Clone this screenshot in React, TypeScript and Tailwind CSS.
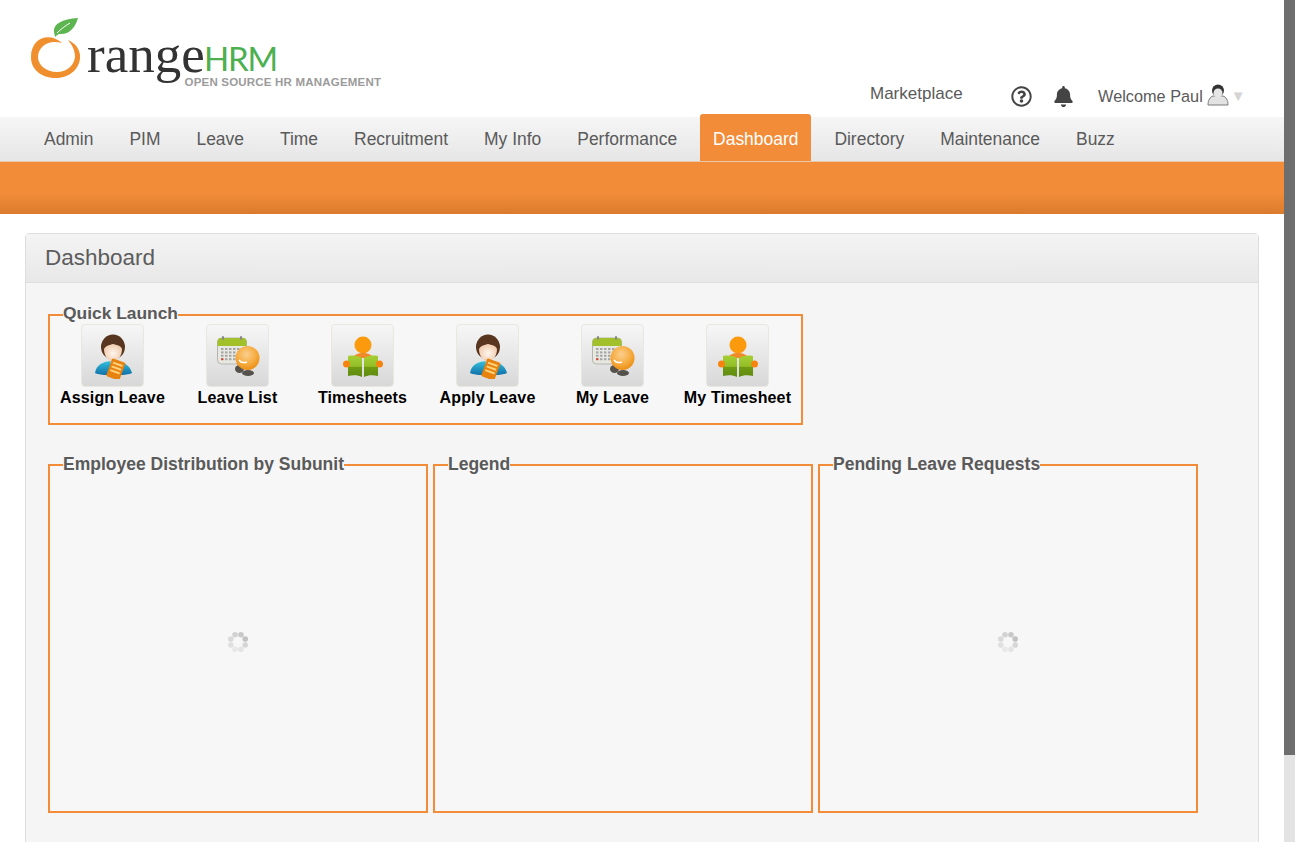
import React from "react";
import { FaBell, FaRegQuestionCircle } from "react-icons/fa";

function Logo() {
  return (
    <svg width="400" height="117" viewBox="0 0 400 117" className="shrink-0">
      <path
        fill="#ef8f2e"
        d="M62 43 C50 32 31 37 31 57 C31 71 43 78 56 78 C70 78 81 68 80 55 C79 48 75 43 68 40 C72 45 75 50 75 57 C74 66 66 72 57 72 C46 72 38 65 38 57 C38 47 48 39 62 43 Z"
      />
      <path fill="#5cb54f" d="M54 32 C53 24 62 19 78 18 C75 28 69 35 59 34 C57 35 56 36 55 37 Z" />
      <path d="M57 33 C61 29 65 26 70 23" stroke="#fff" strokeWidth="1" fill="none" />
      <text x="87" y="72" fontFamily="Liberation Serif" fontWeight="400" fontSize="53" fill="#333">
        range
      </text>
      <text x="204" y="71" fontFamily="Lato" fontWeight="400" fontSize="33" fill="#4cb050" letterSpacing="-1.2">
        HRM
      </text>
      <text x="184.5" y="86" fontFamily="Liberation Sans" fontWeight="700" fontSize="11.5" fill="#9b9b9b" letterSpacing="0.2">
        OPEN SOURCE HR MANAGEMENT
      </text>
    </svg>
  );
}

function PersonIcon() {
  return (
    <svg width="42" height="46" viewBox="0 0 42 46">
      <defs>
        <linearGradient id="shirt" x1="0" y1="0" x2="0" y2="1">
          <stop offset="0" stopColor="#36c0dc" />
          <stop offset="1" stopColor="#0f6fa8" />
        </linearGradient>
        <radialGradient id="face" cx="0.5" cy="0.55" r="0.6">
          <stop offset="0" stopColor="#fff6ee" />
          <stop offset="1" stopColor="#eec6a6" />
        </radialGradient>
      </defs>
      <path d="M3 40 C4 32 11 28 21 28 C31 28 38 32 40 40 C36 43 7 43 3 40 Z" fill="url(#shirt)" />
      <ellipse cx="21" cy="14" rx="12" ry="12.500" fill="#57351f" />
      <path d="M12 16 C14 12 18 12 21 11 C24 12 29 12 30 16 C30 23 26 28 21 28 C16 28 12 23 12 16 Z" fill="url(#face)" />
      <path d="M18.500 26 h5 v4 l-2.500 2 l-2.500 -2 Z" fill="#e9c5aa" />
      <g transform="rotate(20 24 36)">
        <rect x="17" y="27" width="14" height="19" rx="1.500" fill="#e7820f" />
        <rect x="19" y="30" width="10" height="2" fill="#fbd27a" />
        <rect x="19" y="34" width="10" height="2" fill="#fbd27a" />
        <rect x="19" y="38" width="10" height="2" fill="#fbd27a" />
      </g>
    </svg>
  );
}

function CalendarIcon() {
  const cells = [0, 1, 2, 3].flatMap((r) => [0, 1, 2, 3, 4].map((c) => [c, r]));
  return (
    <svg width="46" height="46" viewBox="0 0 46 46">
      <defs>
        <radialGradient id="ball" cx="0.45" cy="0.35" r="0.7">
          <stop offset="0" stopColor="#fbcf8f" />
          <stop offset="0.6" stopColor="#f6aa3c" />
          <stop offset="1" stopColor="#e8890c" />
        </radialGradient>
      </defs>
      <rect x="2.500" y="5" width="29" height="26" rx="4" fill="#e8e8e2" stroke="#b5b5ad" />
      <path d="M2.500 13 V9 a4 4 0 0 1 4 -4 H27.500 a4 4 0 0 1 4 4 V13 Z" fill="#a2c02a" />
      <rect x="7" y="3" width="2" height="4" rx="1" fill="#888" />
      <rect x="25" y="3" width="2" height="4" rx="1" fill="#888" />
      {cells.map(([c, r]) => (
        <rect key={`${c}-${r}`} x={6 + c * 4} y={15 + r * 3.400} width="2.500" height="2" fill={c === 0 && r === 3 ? "#d04b3a" : "#a5a5a5"} />
      ))}
      <ellipse cx="24.500" cy="36" rx="4.500" ry="4" fill="#55524c" />
      <ellipse cx="33" cy="40" rx="6" ry="3" fill="#55524c" />
      <circle cx="32.500" cy="25" r="12" fill="url(#ball)" />
      <path d="M24 27 C26 30 29 30 32 29" stroke="#fff" strokeWidth="1.500" fill="none" />
    </svg>
  );
}

function BookIcon() {
  return (
    <svg width="40" height="46" viewBox="0 0 40 46">
      <defs>
        <linearGradient id="book" x1="0" y1="0" x2="0" y2="1">
          <stop offset="0" stopColor="#a6cf35" />
          <stop offset="0.5" stopColor="#94bf26" />
          <stop offset="0.55" stopColor="#6f9a12" />
          <stop offset="1" stopColor="#5f8a10" />
        </linearGradient>
      </defs>
      <circle cx="20" cy="12" r="8.500" fill="#fb9a0c" />
      <path d="M9 25 C12 21 16 20 20 20 C24 20 28 21 31 25 Z" fill="#f08a28" />
      <path d="M5 23 C10 22 16 23 19 25 V44 C15 42 10 42 5 43 Z" fill="url(#book)" />
      <path d="M35 23 C30 22 24 23 21 25 V44 C25 42 30 42 35 43 Z" fill="url(#book)" />
      <circle cx="3.500" cy="31" r="3.500" fill="#f7830f" />
      <circle cx="36.500" cy="31" r="3.500" fill="#f7830f" />
    </svg>
  );
}

function Spinner() {
  const shades = ["#d2d2d2", "#c8c8c8", "#c2c2c2", "#d6d6d6", "#e4e4e4", "#e8e8e8", "#e0e0e0", "#dadada"];
  return (
    <svg width="22" height="22" viewBox="-11 -11 22 22">
      {shades.map((fill, i) => {
        const a = ((i * 45 - 112.5) * Math.PI) / 180;
        return <circle key={i} cx={7.800 * Math.cos(a)} cy={7.800 * Math.sin(a)} r="2.800" fill={fill} />;
      })}
    </svg>
  );
}

const launch = [
  { label: "Assign Leave", Icon: PersonIcon },
  { label: "Leave List", Icon: CalendarIcon },
  { label: "Timesheets", Icon: BookIcon },
  { label: "Apply Leave", Icon: PersonIcon },
  { label: "My Leave", Icon: CalendarIcon },
  { label: "My Timesheet", Icon: BookIcon },
];

const navItems = ["Admin", "PIM", "Leave", "Time", "Recruitment", "My Info", "Performance", "Dashboard", "Directory", "Maintenance", "Buzz"];

function Chart({ title, loading }: { title: string; loading?: boolean }) {
  return (
    <fieldset className="flex h-[358px] w-[380px] flex-col items-center border-2 border-[#f28c38] bg-[#f7f7f7]">
      <legend className="ml-[13px] -translate-y-[1px] text-[17.5px] font-bold leading-[20px] text-[#5a5a5a]">{title}</legend>
      {loading && (
        <div className="flex h-full w-full items-center justify-center pb-[3px]">
          <Spinner />
        </div>
      )}
    </fieldset>
  );
}

export default function App() {
  return (
    <div className="flex h-[842px] w-[1295px] overflow-hidden bg-white font-['Liberation_Sans',Arial,sans-serif] text-[#5a5a5a]">
      <div className="w-[1284px] shrink-0">
        <header className="flex h-[117px] items-start">
          <Logo />
          <div className="ml-[470px] flex items-center pt-[84px]">
            <span className="text-[17px] leading-[20px] -translate-y-[2px]">Marketplace</span>
            <FaRegQuestionCircle className="ml-[48px] text-[21px] text-[#444]" />
            <FaBell className="ml-[21px] text-[21px] text-[#444]" />
            <span className="ml-[24.5px] text-[16.3px] leading-[24px]">Welcome Paul</span>
            <svg width="22" height="22" viewBox="0 0 22 22" className="ml-[4px] -translate-y-[1px]">
              <path d="M1 21 C1 16 3 13 6 12 H16 C19 13 21 16 21 21 Z" fill="#e2e2e2" stroke="#7d7d7d" />
              <circle cx="11" cy="6.500" r="6" fill="#333" />
              <ellipse cx="11" cy="9" rx="4.500" ry="4.500" fill="#e6e6e6" />
            </svg>
            <span className="ml-[2px] text-[15px] leading-[24px] text-[#d4d4d4]">▼</span>
          </div>
        </header>

        <nav className="flex h-[44px] items-stretch bg-gradient-to-b from-[#f6f6f6] to-[#e6e6e6] pl-[26px] text-[17.45px]">
          {navItems.map((item) =>
            item === "Dashboard" ? (
              <a key={item} className="relative z-10 mx-[5px] -mt-[3px] flex h-[47px] items-center rounded-t-[3px] bg-[#f28c38] px-[13px] pt-[3px] text-white">
                {item}
              </a>
            ) : (
              <a key={item} className="flex items-center px-[18px]">
                {item}
              </a>
            ),
          )}
        </nav>

        <div className="h-[53px] border-t border-[#e8c9ab] bg-gradient-to-b from-[#f28c38] from-[60%] to-[#d97b2e]" />

        <main className="px-[25px] pt-[19px]">
          <section className="h-[700px] rounded-t-[4px] border border-[#dedede] bg-[#f5f5f5]">
            <h1 className="flex h-[49px] items-center border-b border-[#dedede] bg-gradient-to-b from-[#f4f4f4] to-[#e8e8e8] pl-[19px] text-[22.5px] font-normal text-[#5c5c5c]">
              Dashboard
            </h1>
            <div className="pl-[22px] pt-[22px]">
              <fieldset className="h-[120px] w-[755px] border-2 border-[#f28c38] bg-[#f7f7f7]">
                <legend className="ml-[13px] -translate-y-[2px] text-[17.4px] font-bold leading-[20px] text-[#5a5a5a]">Quick Launch</legend>
                <div className="-mt-[1px] flex">
                  {launch.map(({ label, Icon }, i) => (
                    <div key={i} className="flex w-[125px] flex-col items-center">
                      <div className="flex h-[63px] w-[63px] items-center justify-center rounded-[4px] border border-[#e8e8e0] bg-gradient-to-b from-[#f6f6f6] to-[#d8d8d8]">
                        <Icon />
                      </div>
                      <span className="whitespace-nowrap text-[16px] font-bold leading-[22px] tracking-[0.15px] text-black">{label}</span>
                    </div>
                  ))}
                </div>
              </fieldset>
              <div className="mt-[30px] flex gap-[5px]">
                <Chart title="Employee Distribution by Subunit" loading />
                <Chart title="Legend" />
                <Chart title="Pending Leave Requests" loading />
              </div>
            </div>
          </section>
        </main>
      </div>
      <div className="flex w-[11px] shrink-0 flex-col bg-[#e3e3e3]">
        <div className="h-[755px] bg-[#6e6e6e]" />
      </div>
    </div>
  );
}
